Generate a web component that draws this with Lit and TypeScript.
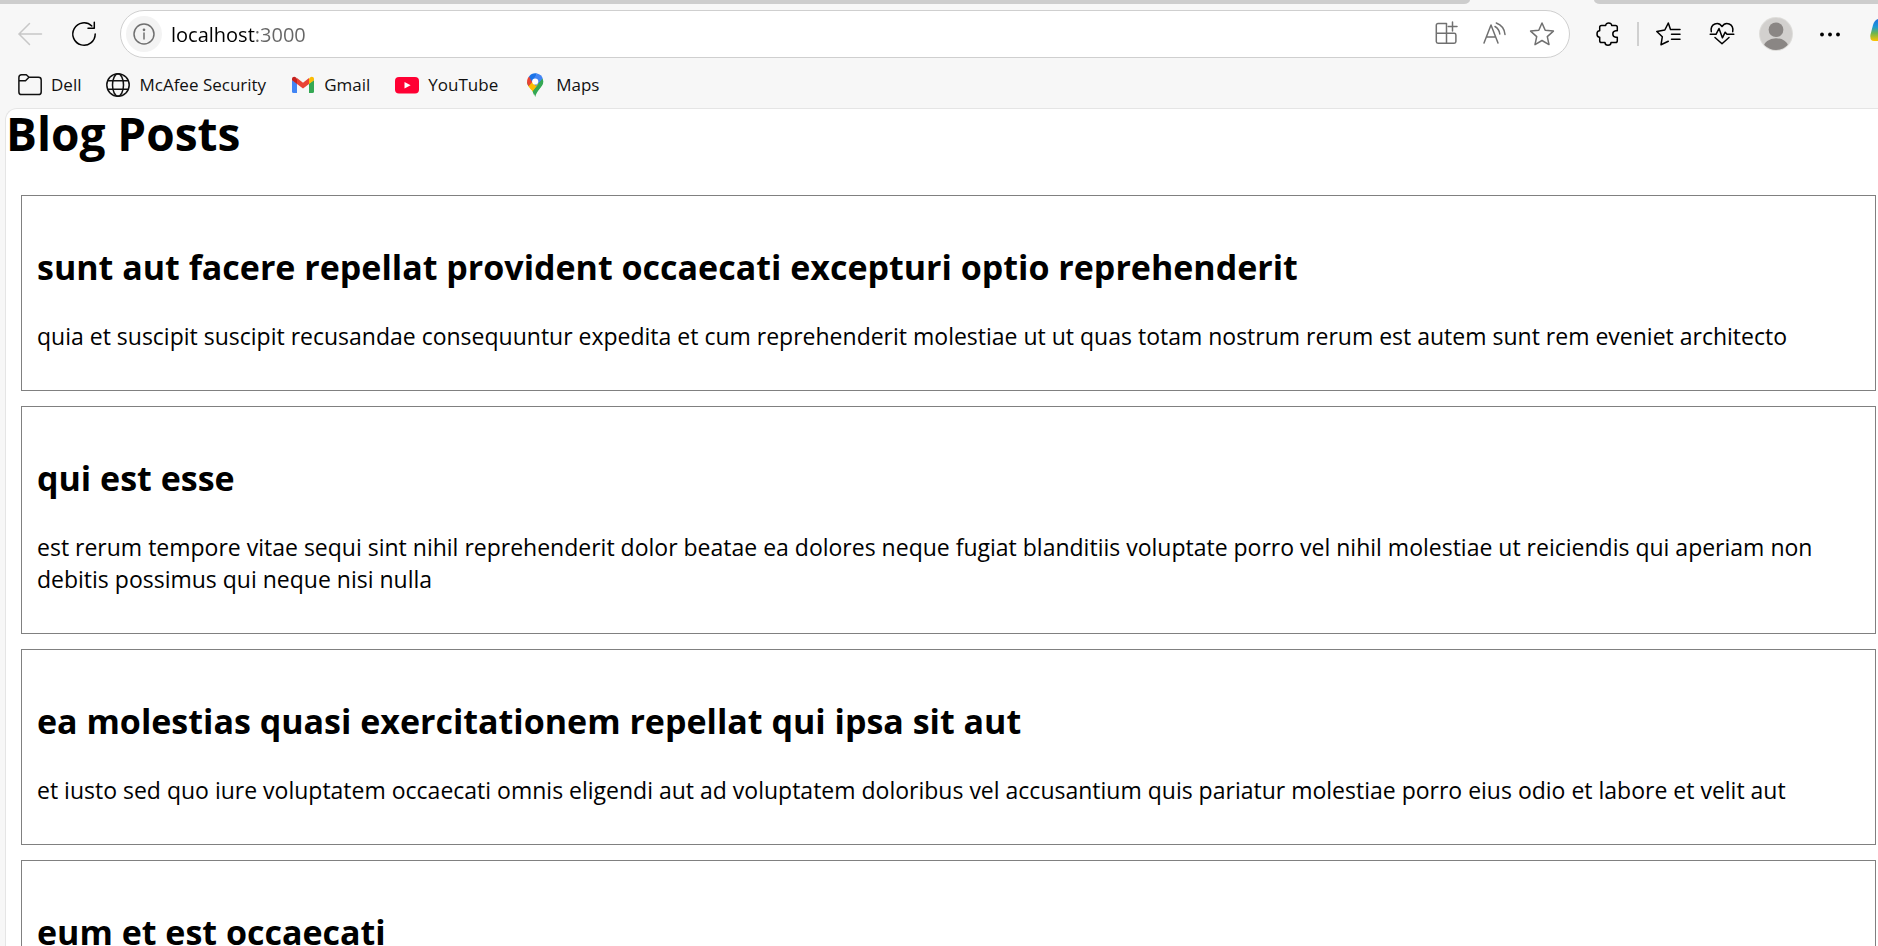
import { LitElement, html, css, svg } from "lit";
import { customElement, property } from "lit/decorators.js";

const icons = {
  back: svg`<path d="M23.5 12H.8M11.5 1.5 1 12l10.5 10.5"/>`,
  refresh: svg`<path d="M23.2 12A11.2 11.2 0 1 1 19.8 4M16 6.3h6.3V.3"/>`,
  info: svg`<circle cx="12" cy="12" r="10"/><path d="M12 11v6"/><circle cx="12" cy="7.8" r=".6" fill="currentColor"/>`,
  apps: svg`<path d="M12.5 21V1.500H4A1.700 1.700 0 0 0 2.300 3.200V19.500A1.700 1.700 0 0 0 4 21.200H20.200A1.700 1.700 0 0 0 21.900 19.500V13A1.700 1.700 0 0 0 20.200 11.300H2.300M18.500 0v9M14.300 4.500h8.700"/>`,
  read: svg`<path d="M2 21 9 3 16 21M4.400 15h9.200M13 4.500A10 10 0 0 1 17.800 12M14.300 1A13.500 13.500 0 0 1 23 12.500"/>`,
  star: svg`<path d="M12 1 15.200 8.300 23.400 9.100 17.300 14.600 19 22.600 12 18.500 5 22.600 6.700 14.600.600 9.100 8.800 8.300Z"/>`,
  puzzle: svg`<path d="M6.500 3.500H10.700C10.600 1.700 12.200.900 13.700.900S16.800 1.700 16.700 3.500H20.500Q22.300 3.500 22.300 5.300V8.800H20.800C18.800 9 17.800 10.300 17.800 12S18.800 15 20.800 15.200H22.300V18.800Q22.300 20.600 20.500 20.600H16C15.900 22.300 14.500 23.200 13 23.200S10.100 22.300 10 20.600H6.500Q4.700 20.600 4.700 18.800V15.200C3 15.200 2 13.700 2 12S3 8.800 4.700 8.800V5.300Q4.700 3.500 6.500 3.500Z"/>`,
  favorites: svg`<path d="M14.500 7.500 12.300 1 8.800 8 .800 9.500 6.300 14.800 5 22.800 12.300 19.300M15.500 7.500H24M15.500 12.300H24M15.500 17.200H24"/>`,
  heart: svg`<path d="M1.300 9.700C-.100 1.300 8.500-.900 12 4.500 15.500-.900 24.100 1.300 22.700 9.700M.200 12.300H6L9 6.500 12.400 15.800 15.200 10.200 17 12.300H23.800M5 15.500 12 21.800 19 15.500"/>`,
  more: svg`<g fill="currentColor" stroke="none"><circle cx="4" cy="12.500" r="1.900"/><circle cx="12" cy="12.500" r="1.900"/><circle cx="20" cy="12.500" r="1.900"/></g>`,
  avatar: svg`<clipPath id="face"><circle cx="12" cy="12" r="11.300"/></clipPath><g stroke="none"><circle cx="12" cy="12" r="12" fill="#deddda"/><circle cx="12" cy="12" r="11.300" fill="#d2d0ce"/><g clip-path="url(#face)" fill="#8a8684"><circle cx="12" cy="9" r="5.200"/><ellipse cx="12" cy="21.500" rx="8.800" ry="6.500"/></g></g>`,
  copilot: svg`<defs><linearGradient id="cp" x1="0" y1="0" x2="0" y2="1"><stop offset="0" stop-color="#1f6fe0"/><stop offset=".35" stop-color="#1b9ad8"/><stop offset=".65" stop-color="#6fb64c"/><stop offset="1" stop-color="#ffc400"/></linearGradient></defs><path stroke="none" fill="url(#cp)" d="M8-3H20V19H4Q-.200 19 .400 13L3 3Q4.500-2 8-3Z"/>`,
  folder: svg`<path d="M.900 4.500Q.900 1.800 3.500 1.800H8.300L11 4.300H20.500Q23.200 4.300 23.200 7V19Q23.200 21.600 20.500 21.600H3.500Q.900 21.600.900 19ZM.900 7.700H7.500L11 4.300"/>`,
  globe: svg`<circle cx="12" cy="12" r="11.200"/><ellipse cx="12" cy="12" rx="5.500" ry="11.200"/><path d="M1.800 7.700H22.200M1.800 16.300H22.200"/>`,
  gmail: svg`<g stroke="none"><path fill="#4285f4" d="M1 7V18.500Q1 20 2.500 20H6V10.500Z"/><path fill="#34a853" d="M18 10.500V20H21.500Q23 20 23 18.500V7Z"/><path fill="#fbbc04" d="M18 5.500V11L23 7.300V6C23 3.800 20.500 3.200 19 4.500Z"/><path fill="#c5221f" d="M1 6V7.300L6 11V5.500L5 4.500C3.500 3.200 1 3.800 1 6Z"/><path fill="#ea4335" d="M6 11V5L12 9.700 18 5V11L12 15.500Z"/></g>`,
  youtube: svg`<rect y="4" width="24" height="16.500" rx="4" fill="#ff0033" stroke="none"/><path d="M9.500 9V15.600L15.600 12.300Z" fill="#fff" stroke="none"/>`,
  maps: svg`<g stroke="none"><path fill="#34a853" d="M4 9C4 14 10.300 15 12.200 24 14 16.500 20.300 14 20.300 8.500L17.500 4Z"/><path fill="#fbbc04" d="M5.300 13C7 16 8.500 16.500 9.800 18.700L16 11 9.500 7Z"/><path fill="#ea4335" d="M6 3.500C3 7 4 11 5.500 13.200L12 6Z"/><path fill="#1a73e8" d="M6 3.500C8 .800 11-.100 14 .600L12 6 8.800 8.500Z"/><path fill="#4285f4" d="M14 .600C17 1.300 19 3.200 19.800 5.500L13 13 9 8.500Z"/><path fill="#34a853" d="M19.800 5.500C20.900 9 19.500 12 17.500 14L11 22 9.600 18.500Z"/><circle cx="12.200" cy="8.500" r="3.100" fill="#fff"/></g>`,
};
type IconName = keyof typeof icons;

@customElement("ui-icon")
class UiIcon extends LitElement {
  @property() name: IconName = "back";
  static styles = css`
    :host { display: block; flex: none; width: 24px; height: 24px; }
    svg { display: block; width: 100%; height: 100%; overflow: visible; fill: none;
      stroke: currentColor; stroke-width: 1.5; stroke-linecap: round; stroke-linejoin: round; }
  `;
  render() {
    return html`<svg viewBox="0 0 24 24" aria-hidden="true">${icons[this.name]}</svg>`;
  }
}

@customElement("browser-chrome")
class BrowserChrome extends LitElement {
  static styles = css`
    :host { display: block; background: #f7f7f7; color: #000; overflow: hidden; }
    .tabs { display: flex; height: 4px; background: #f7f7f7; }
    .tabs span { background: #cdcdcd; }
    .before { flex: 1; border-bottom-right-radius: 6px 4px; }
    .tabs .active { width: 124px; background: transparent; }
    .after { width: 284px; border-bottom-left-radius: 6px 4px; }
    .toolbar { display: flex; align-items: center; height: 60px; padding-left: 3px; }
    button { display: flex; align-items: center; justify-content: center; flex: none; width: 54px;
      height: 48px; padding: 0; border: 0; background: none; color: inherit; }
    button:disabled { color: #c8c8c8; }
    .address { display: flex; align-items: center; flex: 1; min-width: 0; box-sizing: border-box;
      height: 48px; margin: 0 10px 0 9px; padding: 0 3px 0 5px; border: 1px solid #cfcfcf;
      border-radius: 24px; background: #fff; }
    .address button { width: 48px; height: 44px; color: #707070; }
    .address .site { width: 36px; height: 36px; border-radius: 50%; background: #f3f3f3; }
    input { flex: 1; min-width: 0; height: 40px; margin: 0; padding: 0 0 0 9px; border: 0; outline: 0;
      font: 20px/28px "Open Sans", "Noto Sans", sans-serif; color: transparent;
      background: linear-gradient(to right, #000 93px, #666 93px); background-clip: text;
      -webkit-background-clip: text; }
    .divider { width: 2px; height: 24px; margin: 0 2px 0 3px; background: #d0d0d0; }
    .avatar { width: 34px; height: 34px; }
    .copilot { width: 21px; justify-content: flex-start; padding-left: 13px; overflow: hidden; }
    nav { display: flex; align-items: center; gap: 25px; height: 42px; padding: 0 18px 2px; }
    a { display: flex; align-items: center; gap: 9px; color: #111; text-decoration: none;
      font: 17px/24px "Open Sans", "Noto Sans", sans-serif; }
  `;
  private links: [IconName, string][] = [
    ["folder", "Dell"], ["globe", "McAfee Security"], ["gmail", "Gmail"],
    ["youtube", "YouTube"], ["maps", "Maps"],
  ];
  render() {
    return html`
      <div class="tabs"><span class="before"></span><span class="active"></span><span class="after"></span></div>
      <div class="toolbar">
        <button disabled aria-label="Back"><ui-icon name="back"></ui-icon></button>
        <button aria-label="Refresh"><ui-icon name="refresh"></ui-icon></button>
        <div class="address">
          <button class="site" aria-label="Site information"><ui-icon name="info"></ui-icon></button>
          <input aria-label="Address" .value=${"localhost:3000"} />
          <button aria-label="Apps"><ui-icon name="apps"></ui-icon></button>
          <button aria-label="Read aloud"><ui-icon name="read"></ui-icon></button>
          <button aria-label="Add to favorites"><ui-icon name="star"></ui-icon></button>
        </div>
        <button aria-label="Extensions"><ui-icon name="puzzle"></ui-icon></button>
        <span class="divider"></span>
        <button aria-label="Favorites"><ui-icon name="favorites"></ui-icon></button>
        <button aria-label="Browser essentials"><ui-icon name="heart"></ui-icon></button>
        <button aria-label="Profile"><ui-icon class="avatar" name="avatar"></ui-icon></button>
        <button aria-label="Settings and more"><ui-icon name="more"></ui-icon></button>
        <button class="copilot" aria-label="Copilot"><ui-icon name="copilot"></ui-icon></button>
      </div>
      <nav aria-label="Favorites bar">
        ${this.links.map(([icon, label]) => html`<a href="#"><ui-icon name=${icon}></ui-icon>${label}</a>`)}
      </nav>
    `;
  }
}

@customElement("blog-posts")
class BlogPosts extends LitElement {
  static styles = css`
    :host { display: block; overflow: hidden; background: #fff; color: #000;
      border: 1px solid #e5e5e5; border-width: 1px 0 0 1px; border-top-left-radius: 12px;
      font: 23px/32px "Open Sans", "Noto Sans", sans-serif; }
    h1 { margin: 0 0 38px; font-size: 46px; line-height: 48px; font-weight: 700; }
    article { margin: 0 2px 15px 15px; padding: 17px 15px 15px; border: 1px solid #808080; }
    h2 { margin: 30px 0 29px; font-size: 34px; line-height: 48px; font-weight: 700; }
    p { margin: 0 0 23px; }
  `;
  private posts = [
    { title: "sunt aut facere repellat provident occaecati excepturi optio reprehenderit",
      body: "quia et suscipit suscipit recusandae consequuntur expedita et cum reprehenderit molestiae ut ut quas totam nostrum rerum est autem sunt rem eveniet architecto" },
    { title: "qui est esse",
      body: "est rerum tempore vitae sequi sint nihil reprehenderit dolor beatae ea dolores neque fugiat blanditiis voluptate porro vel nihil molestiae ut reiciendis qui aperiam non debitis possimus qui neque nisi nulla" },
    { title: "ea molestias quasi exercitationem repellat qui ipsa sit aut",
      body: "et iusto sed quo iure voluptatem occaecati omnis eligendi aut ad voluptatem doloribus vel accusantium quis pariatur molestiae porro eius odio et labore et velit aut" },
    { title: "eum et est occaecati", body: "" },
  ];
  render() {
    return html`<h1>Blog Posts</h1>
      ${this.posts.map((p) => html`<article><h2>${p.title}</h2>${p.body ? html`<p>${p.body}</p>` : ""}</article>`)}`;
  }
}

@customElement("app-root")
class AppRoot extends LitElement {
  static styles = css`
    :host { display: flex; flex-direction: column; height: 100vh; overflow: hidden; background: #f7f7f7; }
    browser-chrome { flex: none; }
    blog-posts { flex: 1; min-height: 0; margin-left: 5px; }
  `;
  render() {
    return html`<browser-chrome></browser-chrome><blog-posts></blog-posts>`;
  }
}
